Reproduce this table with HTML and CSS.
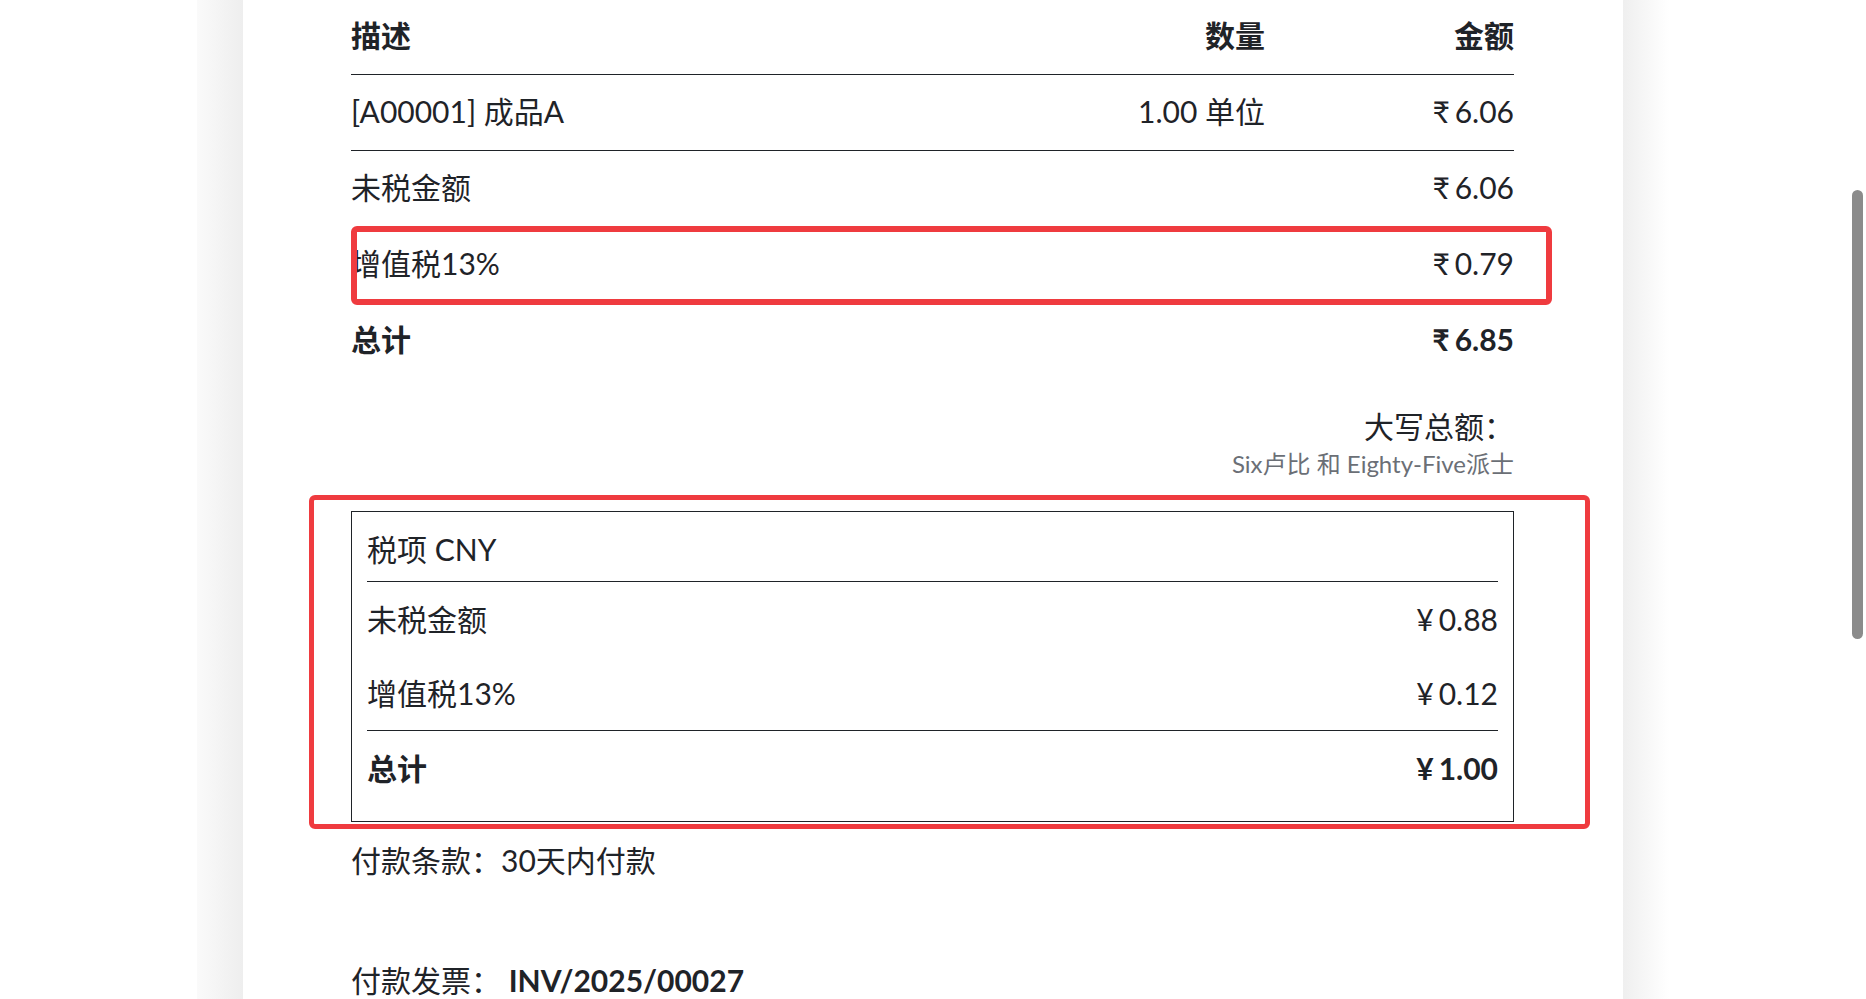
FILE: index.html
```html
<!DOCTYPE html>
<html lang="zh-CN">
<head>
    <meta charset="UTF-8">
    <meta name="viewport" content="width=device-width, initial-scale=1.0">
    <title>INV/2025/00027</title>
    <link rel="stylesheet" href="styles.css">
</head>
<body>
    <!-- Paper sheet with side shadows -->
    <div class="gutter">
        <div class="sheet">
            <div class="lines">
                <div class="line head">
                    <span>描述</span>
                    <span class="num">数量</span>
                    <span class="num">金额</span>
                </div>
                <div class="line">
                    <span>[A00001] 成品A</span>
                    <span class="num">1.00 单位</span>
                    <span class="num"><span class="cur">₹</span>6.06</span>
                </div>
            </div>

            <div class="totals">
                <div class="trow">
                    <span>未税金额</span>
                    <span><span class="cur">₹</span>6.06</span>
                </div>
                <div class="trow marked">
                    <span>增值税13%</span>
                    <span><span class="cur">₹</span>0.79</span>
                    <span class="mark mark-tax"></span>
                </div>
                <div class="trow strong">
                    <span>总计</span>
                    <span><span class="cur">₹</span>6.85</span>
                </div>
            </div>

            <div class="in-words">
                <div class="words-label">大写总额：</div>
                <div class="words-text">Six卢比 和 Eighty-Five派士</div>
            </div>

            <div class="tax-box marked">
                <div class="tax-row tax-head">税项 CNY</div>
                <div class="tax-row">
                    <span>未税金额</span>
                    <span><span class="cur">¥</span>0.88</span>
                </div>
                <div class="tax-row ruled">
                    <span>增值税13%</span>
                    <span><span class="cur">¥</span>0.12</span>
                </div>
                <div class="tax-row strong">
                    <span>总计</span>
                    <span><span class="cur">¥</span>1.00</span>
                </div>
                <span class="mark mark-box"></span>
            </div>

            <p class="terms">付款条款：30天内付款</p>
            <p class="ref">付款发票： <strong>INV/2025/00027</strong></p>
        </div>
    </div>

    <div class="scroll-thumb"></div>
</body>
</html>
```

FILE: styles.css
```css
body {
    margin: 0;
    padding: 0;
    background: #ffffff;
    color: #1f2328;
    font-family: "Lato", "Noto Sans CJK SC", sans-serif;
    font-size: 30px;
    line-height: 36px;
    height: 100vh;
    overflow: hidden;
}

.gutter {
    width: 1472px;
    margin: 0 auto;
    padding: 0 46px;
    box-sizing: border-box;
    min-height: 100vh;
    background: linear-gradient(90deg,
        #fafafa 0,
        #eeeeee 46px,
        #ffffff 46px,
        #ffffff calc(100% - 46px),
        #efefef calc(100% - 46px),
        #ffffff 100%);
}

.sheet {
    background: #ffffff;
    padding: 0 109px 0 108px;
    min-height: 100vh;
}

/* Invoice lines */
.line {
    display: grid;
    grid-template-columns: 1fr 200px 249px;
    padding: 18px 0 21px;
    border-bottom: 1px solid #1f2328;
}

.line.head {
    padding: 17px 0 21px;
    font-weight: bold;
}

.num {
    text-align: right;
}

.cur {
    margin-right: 5px;
}

/* Totals */
.trow {
    display: flex;
    justify-content: space-between;
    padding: 18px 0 22px;
}

.strong {
    font-weight: bold;
}

.in-words {
    margin-top: 29px;
    text-align: right;
}

.words-text {
    margin-top: 5px;
    font-size: 24px;
    line-height: 30px;
    color: #6b6f76;
}

/* Tax summary in company currency */
.tax-box {
    margin-top: 32px;
    border: 1px solid #1f2328;
    padding: 0 15px 16px;
}

.tax-row {
    display: flex;
    justify-content: space-between;
    padding: 19px 0;
}

.tax-head {
    padding: 19px 0 14px;
    border-bottom: 1px solid #1f2328;
}

.tax-row.ruled {
    border-bottom: 1px solid #1f2328;
}

.terms {
    margin: 20px 0 0;
}

.ref {
    margin: 84px 0 0;
}

.ref strong {
    font-weight: bold;
}

/* Red highlight annotations */
.marked {
    position: relative;
}

.mark {
    position: absolute;
    border: 6px solid #ef3b3f;
    border-radius: 6px;
    pointer-events: none;
}

.mark-tax {
    top: -1px;
    bottom: -2px;
    left: 0;
    right: -38px;
}

.mark-box {
    top: -17px;
    bottom: -8px;
    left: -43px;
    right: -77px;
    border-width: 5px;
}

.scroll-thumb {
    position: fixed;
    right: 3px;
    top: 190px;
    width: 11px;
    height: 449px;
    background: #8b8b8b;
    border-radius: 6px;
}
```
